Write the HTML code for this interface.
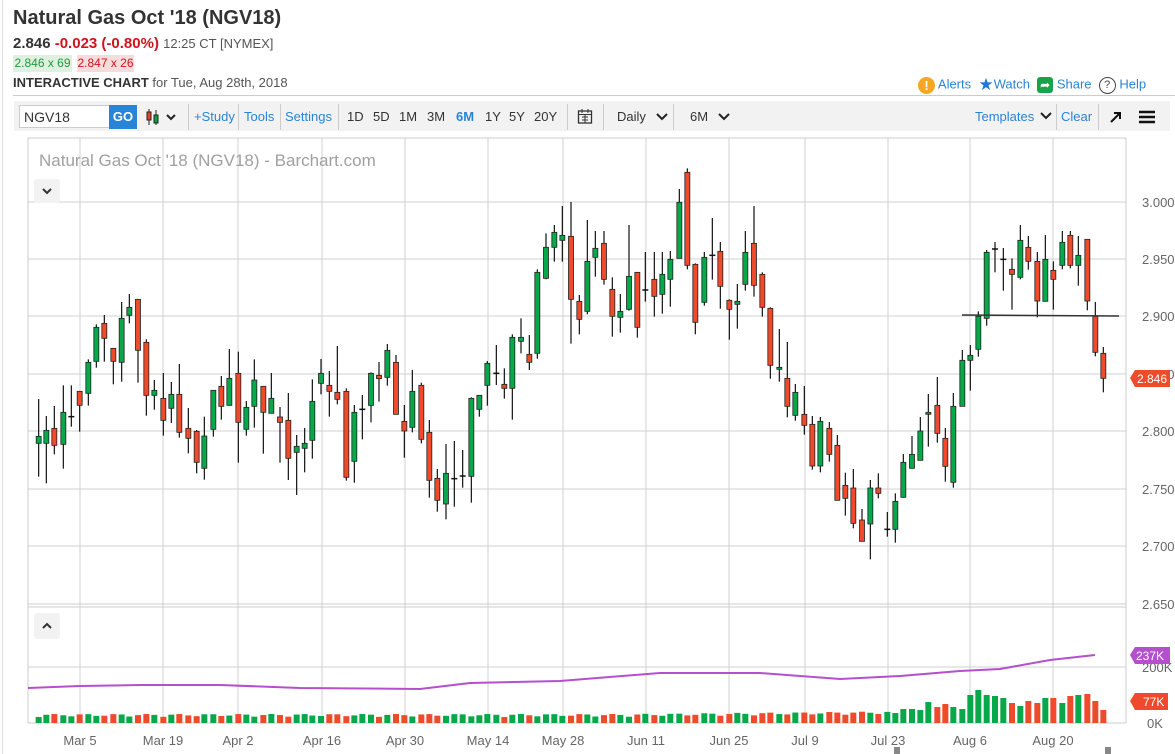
<!DOCTYPE html>
<html><head><meta charset="utf-8"><style>
body{margin:0;width:1175px;height:754px;overflow:hidden;background:#fff;font-family:"Liberation Sans",sans-serif;position:relative;color:#333}
.a{position:absolute;white-space:nowrap}
.blue{color:#2a84d6}
</style></head><body>
<div class="a" style="left:2px;top:0;width:1px;height:754px;background:#ddd"></div>
<div class="a" style="left:13px;top:7px;font-size:20px;font-weight:bold;color:#333">Natural Gas Oct '18 (NGV18)</div>
<div class="a" style="left:13px;top:35px;font-size:15px"><b>2.846</b> <b style="color:#d0141b">-0.023 (-0.80%)</b> <span style="font-size:13px;color:#555">12:25 CT [NYMEX]</span></div>
<div class="a" style="left:13px;top:55px;width:59px;height:17px;background:#dff0e1;color:#219a3e;font-size:12px;line-height:17px;text-align:center">2.846 x 69</div>
<div class="a" style="left:77px;top:55px;width:57px;height:17px;background:#f7dcdc;color:#d0141b;font-size:12px;line-height:17px;text-align:center">2.847 x 26</div>
<div class="a" style="left:13px;top:75px;font-size:13px"><b>INTERACTIVE CHART</b> <span style="color:#555">for Tue, Aug 28th, 2018</span></div>
<div class="a blue" style="left:918px;top:75px;font-size:13px"><span style="display:inline-block;width:17px;height:17px;border-radius:50%;background:#f5a623;color:#fff;text-align:center;font-weight:bold;line-height:17px;vertical-align:middle">!</span> Alerts &nbsp;<span style="color:#1e78d8;font-size:17px;vertical-align:middle">★</span>Watch &nbsp;<span style="display:inline-block;width:16px;height:16px;border-radius:3px;background:#1aa34a;color:#fff;text-align:center;line-height:16px;font-size:12px;vertical-align:middle">➦</span> Share &nbsp;<span style="display:inline-block;width:15px;height:15px;border:1.5px solid #444;border-radius:50%;color:#444;text-align:center;line-height:15px;font-size:11px;vertical-align:middle">?</span> Help</div>
<div class="a" style="left:13px;top:95px;width:1162px;height:1px;background:#ccc"></div>
<div class="a" style="left:14px;top:101px;width:1156px;height:30px;background:#f2f2f2"></div>
<div class="a" style="left:19px;top:105px;height:23px;background:#fff;border:1px solid #ccc;font-size:14px;line-height:23px;padding-left:4px;box-sizing:border-box;width:91px">NGV18</div>
<div class="a" style="left:109px;top:105px;width:28px;height:24px;background:#2a84d6;color:#fff;font-weight:bold;font-size:13px;line-height:24px;text-align:center">GO</div>
<svg class="a" style="left:145px;top:108px" width="36" height="18"><line x1="4" y1="1" x2="4" y2="17" stroke="#222"/><rect x="2" y="4" width="4" height="8" fill="#e8412a" stroke="#222"/><line x1="11" y1="2" x2="11" y2="17" stroke="#222"/><rect x="9" y="7" width="4" height="8" fill="#09a046" stroke="#222"/><path d="M22 7l4 4 4-4" stroke="#222" stroke-width="2" fill="none"/></svg>
<div class="a" style="left:188px;top:104px;width:1px;height:26px;background:#ccc"></div>
<div class="a blue" style="left:194px;top:109px;font-size:13px">+Study</div>
<div class="a" style="left:238px;top:104px;width:1px;height:26px;background:#ccc"></div>
<div class="a blue" style="left:244px;top:109px;font-size:13px">Tools</div>
<div class="a" style="left:280px;top:104px;width:1px;height:26px;background:#ccc"></div>
<div class="a blue" style="left:285px;top:109px;font-size:13px">Settings</div>
<div class="a" style="left:338px;top:104px;width:1px;height:26px;background:#ccc"></div>
<div class="a" style="left:347px;top:109px;font-size:13px">1D</div>
<div class="a" style="left:373px;top:109px;font-size:13px">5D</div>
<div class="a" style="left:399px;top:109px;font-size:13px">1M</div>
<div class="a" style="left:427px;top:109px;font-size:13px">3M</div>
<div class="a blue" style="left:456px;top:109px;font-size:13px;font-weight:bold">6M</div>
<div class="a" style="left:485px;top:109px;font-size:13px">1Y</div>
<div class="a" style="left:509px;top:109px;font-size:13px">5Y</div>
<div class="a" style="left:534px;top:109px;font-size:13px">20Y</div>
<div class="a" style="left:567px;top:104px;width:1px;height:26px;background:#ccc"></div>
<svg class="a" style="left:577px;top:108px" width="16" height="16"><rect x="1.5" y="3" width="13" height="12" fill="none" stroke="#333" stroke-width="1.3"/><path d="M1.5 6.5h13M5 1v4M11 1v4M5 9h6M5 12h6M8 6.5v8.5" stroke="#333" stroke-width="1"/></svg>
<div class="a" style="left:603px;top:104px;width:1px;height:26px;background:#ccc"></div>
<div class="a" style="left:617px;top:109px;font-size:13px">Daily</div>
<svg class="a" style="left:656px;top:113px" width="12" height="8"><path d="M1 1l5 5 5-5" stroke="#222" stroke-width="2" fill="none"/></svg>
<div class="a" style="left:673px;top:104px;width:1px;height:26px;background:#ccc"></div>
<div class="a" style="left:690px;top:109px;font-size:13px">6M</div>
<svg class="a" style="left:718px;top:113px" width="12" height="8"><path d="M1 1l5 5 5-5" stroke="#222" stroke-width="2" fill="none"/></svg>
<div class="a blue" style="left:975px;top:109px;font-size:13px">Templates</div>
<svg class="a" style="left:1040px;top:112px" width="12" height="8"><path d="M1 1l5 5 5-5" stroke="#222" stroke-width="2" fill="none"/></svg>
<div class="a" style="left:1056px;top:104px;width:1px;height:26px;background:#ccc"></div>
<div class="a blue" style="left:1061px;top:109px;font-size:13px">Clear</div>
<div class="a" style="left:1098px;top:104px;width:1px;height:26px;background:#ccc"></div>
<svg class="a" style="left:1109px;top:110px" width="14" height="14"><path d="M2 12L11 3M5 3h6v6" stroke="#111" stroke-width="2" fill="none"/></svg>
<svg class="a" style="left:1139px;top:110px" width="16" height="14"><path d="M0 2h16M0 7h16M0 12h16" stroke="#111" stroke-width="2.5"/></svg>

<svg id="ch" class="a" style="left:0;top:0" width="1175" height="754"></svg>
<div class="a" style="left:39px;top:151px;font-size:17px;color:#a0a0a0">Natural Gas Oct '18 (NGV18) - Barchart.com</div>
<div class="a" style="left:34px;top:179px;width:26px;height:24px;background:#f2f2f2;border-radius:3px"><svg width="26" height="24"><path d="M9 10l4 4 4-4" stroke="#333" stroke-width="2" fill="none"/></svg></div>
<div class="a" style="left:34px;top:613px;width:26px;height:26px;background:#f2f2f2;border-radius:3px"><svg width="26" height="26"><path d="M9 15l4-4 4 4" stroke="#333" stroke-width="2" fill="none"/></svg></div>
<script>
var s='';
function L(x1,y1,x2,y2,c,w){s+='<line x1="'+x1+'" y1="'+y1+'" x2="'+x2+'" y2="'+y2+'" stroke="'+c+'" stroke-width="'+(w||1)+'"/>';}
function T(x,y,t,c,sz,a){s+='<text x="'+x+'" y="'+y+'" fill="'+c+'" font-size="'+sz+'" font-family="Liberation Sans,sans-serif"'+(a?' text-anchor="'+a+'"':'')+'>'+t+'</text>';}
var X0=28,X1=1126;
var hy=[202,259,316,374,431,489,546,604],pl=['3.000','2.950','2.900','2.850','2.800','2.750','2.700','2.650'];
var vx=[80,163,238,322,405,488,563,646,729,805,888,970,1053],dl=['Mar 5','Mar 19','Apr 2','Apr 16','Apr 30','May 14','May 28','Jun 11','Jun 25','Jul 9','Jul 23','Aug 6','Aug 20'];
for(var i=0;i<hy.length;i++){L(X0,hy[i],X1,hy[i],'#d0d0d0');T(1142,hy[i]+5,pl[i],'#666',13);}
for(i=0;i<vx.length;i++){L(vx[i],138,vx[i],723,'#d0d0d0');T(vx[i],745,dl[i],'#666',13,'middle');}
L(X0,138,X0,723,'#ccc');L(X1,138,X1,723,'#ccc');L(X0,138,X1,138,'#ccc');
L(X0,604,X1,604,'#ccc');L(X0,607,X1,607,'#ccc');L(X0,667,X1,667,'#d0d0d0');L(X0,723,X1,723,'#ccc');
T(1142,672,'200K','#666',13);T(1147,728,'0K','#666',13);
var R=[[28,280,[[32,'G',357,469,490,590],[55,'G',408,451,490,610],[79,'R',378,445,496,523],[106,'G',316,397,493,566],[130,'D',316,407,410,440],[155,'R',334,334,376,455],[181,'G',238,247,340,377],[205,'G',133,142,244,263],[229,'R',105,130,175,245],[256,'R',205,205,244,313],[281,'G',66,115,247,305],[304,'G',42,82,106,130],[330,'R',58,58,211,308],[355,'R',178,187,346,407],[379,'G',300,331,346,389],[406,'R',279,355,421,467],[430,'G',306,343,385,429],[454,'R',252,343,457,473],[481,'R',384,445,475,520],[506,'R',450,454,547,580],[529,'G',410,468,565,599],[556,'G',330,331,448,470],[580,'R',288,319,379,419],[604,'G',207,295,376,377],[631,'R',215,280,427,548],[655,'G',363,382,448,467],[679,'G',238,300,379,443],[706,'R',319,319,397,521],[730,'G',279,355,400,400],[756,'R',381,411,427,548],[781,'R',339,421,535,600],[806,'G',465,499,517,645],[830,'G',444,490,505,577]]],
[300,190,[[37,'G',568,634,751,806],[63,'G',507,550,580,613],[88,'R',543,586,604,680],[112,'R',468,607,628,643],[139,'R',595,604,862,872],[163,'G',645,667,814,878],[187,'D',615,655,658,748],[213,'G',547,550,646,697],[237,'R',516,556,566,635],[262,'G',462,481,562,587],[288,'R',495,517,673,673],[313,'R',645,694,723,803],[337,'G',540,604,712,727],[364,'R',578,586,748,760],[388,'R',690,727,871,923],[412,'R',837,865,931,965],[438,'G',762,850,942,988],[463,'D',753,863,866,950],[488,'D',780,855,858,893],[514,'G',622,625,859,938],[538,'G',615,616,658,680],[562,'G',513,520,586,647],[589,'D',465,547,550,585],[613,'R',535,583,595,626],[637,'G',433,442,595,689],[663,'G',385,442,454,490],[688,'R',435,493,517,540],[712,'G',238,247,490,506],[738,'G',130,172,265,268],[763,'G',105,127,172,215],[787,'G',48,136,151,215],[813,'R',36,139,328,461]]],
[570,160,[[28,'R',405,424,478,523],[52,'G',180,304,454,463],[76,'G',213,265,292,350],[102,'R',213,250,358,374],[127,'R',352,388,469,530],[151,'G',402,454,472,518],[177,'G',195,349,448,452],[202,'R',337,337,502,533],[226,'D',276,387,389,425],[253,'R',276,358,409,470],[277,'G',276,343,403,461],[301,'G',273,298,358,440],[328,'G',87,127,295,295],[352,'R',25,37,316,328],[376,'R',310,313,487,523],[403,'G',276,292,427,437],[427,'D',174,283,286,359],[451,'R',246,274,379,446],[478,'R',418,421,448,539],[502,'G',372,424,433,506],[526,'G',213,277,373,392],[552,'R',138,250,376,410],[577,'R',337,343,442,470],[601,'R',442,445,616,656],[628,'G',507,622,628,665],[652,'R',546,655,739,772],[676,'G',672,697,766,782],[703,'R',678,763,796,824],[727,'R',768,793,918,929],[751,'G',771,784,918,937],[778,'R',786,805,883,905],[802,'R',825,856,1021,1021],[826,'R',938,976,1015,1067]]],
[840,220,[[40,'R',747,804,910,925],[66,'R',867,900,964,964],[91,'G',780,804,912,1018],[115,'R',760,804,820,835],[142,'D',876,925,928,950],[166,'G',820,844,928,968],[190,'G',702,727,832,833],[216,'G',648,703,745,745],[241,'G',591,633,721,721],[265,'G',522,577,583,680],[292,'R',471,556,640,668],[316,'R',624,655,739,785],[340,'G',519,559,787,803],[367,'G',390,421,559,559],[391,'G',375,406,421,512],[415,'G',274,289,388,410],[440,'G',90,97,295,317],[465,'D',66,84,87,157],[490,'D',84,115,118,212],[516,'R',115,148,163,269],[541,'G',15,61,172,178],[565,'R',48,82,124,149],[592,'R',96,124,243,292],[616,'G',45,118,244,244],[640,'R',124,151,178,269],[667,'G',33,67,136,148],[691,'R',33,46,136,145],[715,'G',48,106,136,197],[742,'R',57,58,243,271],[766,'R',246,289,397,409],[790,'R',381,400,475,517]]]];
var late=[10,14,14,13,21,16,19,16,14,28,33,28,27,25,20,17,22,20,25,25,20,27,28,29,22];
var vb='',n=0,tot=128;
R.forEach(function(r){var ox=r[0],oy=r[1];r[2].forEach(function(c){
 var x=ox+c[0]/3,h=oy+c[2]/3,t=oy+c[3]/3,b=oy+c[4]/3,l=oy+c[5]/3;
 L(x,h,x,l,'#111',1.2);
 var col=c[1]=='G'?'#06a84a':c[1]=='R'?'#ef4a2c':'#111';
 if(c[1]=='D'){L(x-3,t+1,x+3,t+1,'#111',1.5);}
 else s+='<rect x="'+(x-2.5)+'" y="'+t+'" width="5" height="'+Math.max(b-t,2)+'" fill="'+col+'" stroke="#222" stroke-width="0.8"/>';
 var base=6+3*Math.abs(Math.sin(n*2.3))+(n>70?(n-70)*0.08:0);
 var li=n-(tot-late.length); if(li>=0&&li<late.length) base=late[li];
 var vc=c[1]=='D'?'#06a84a':col;
 vb+='<rect x="'+(x-3)+'" y="'+(723-base)+'" width="6" height="'+base+'" fill="'+vc+'"/>';n++;
});});
s+=vb;
s+='<path d="M28 688 L80 686 L140 685 L220 685 L300 688 L420 689 L470 683 L560 681 L660 673 L760 673 L840 679 L900 676 L960 671 L1000 669 L1050 660 L1095 655" fill="none" stroke="#b54fce" stroke-width="2"/>';
L(962,315,1119,316,'#333',1.5);
s+='<path d="M1130 378 L1135 370 L1170 370 L1170 387 L1135 387 Z" fill="#ef4a2c"/>';T(1137,383,'2.846','#fff',12);
s+='<path d="M1130 655 L1135 647 L1170 647 L1170 664 L1135 664 Z" fill="#b54fce"/>';T(1136,660,'237K','#fff',12);
s+='<path d="M1130 701 L1135 693 L1168 693 L1168 710 L1135 710 Z" fill="#ef4a2c"/>';T(1143,706,'77K','#fff',12);
s+='<rect x="1105" y="747" width="6" height="7" fill="#888"/><rect x="894" y="747" width="6" height="7" fill="#888"/>';
document.getElementById('ch').innerHTML=s;
</script>
</body></html>
